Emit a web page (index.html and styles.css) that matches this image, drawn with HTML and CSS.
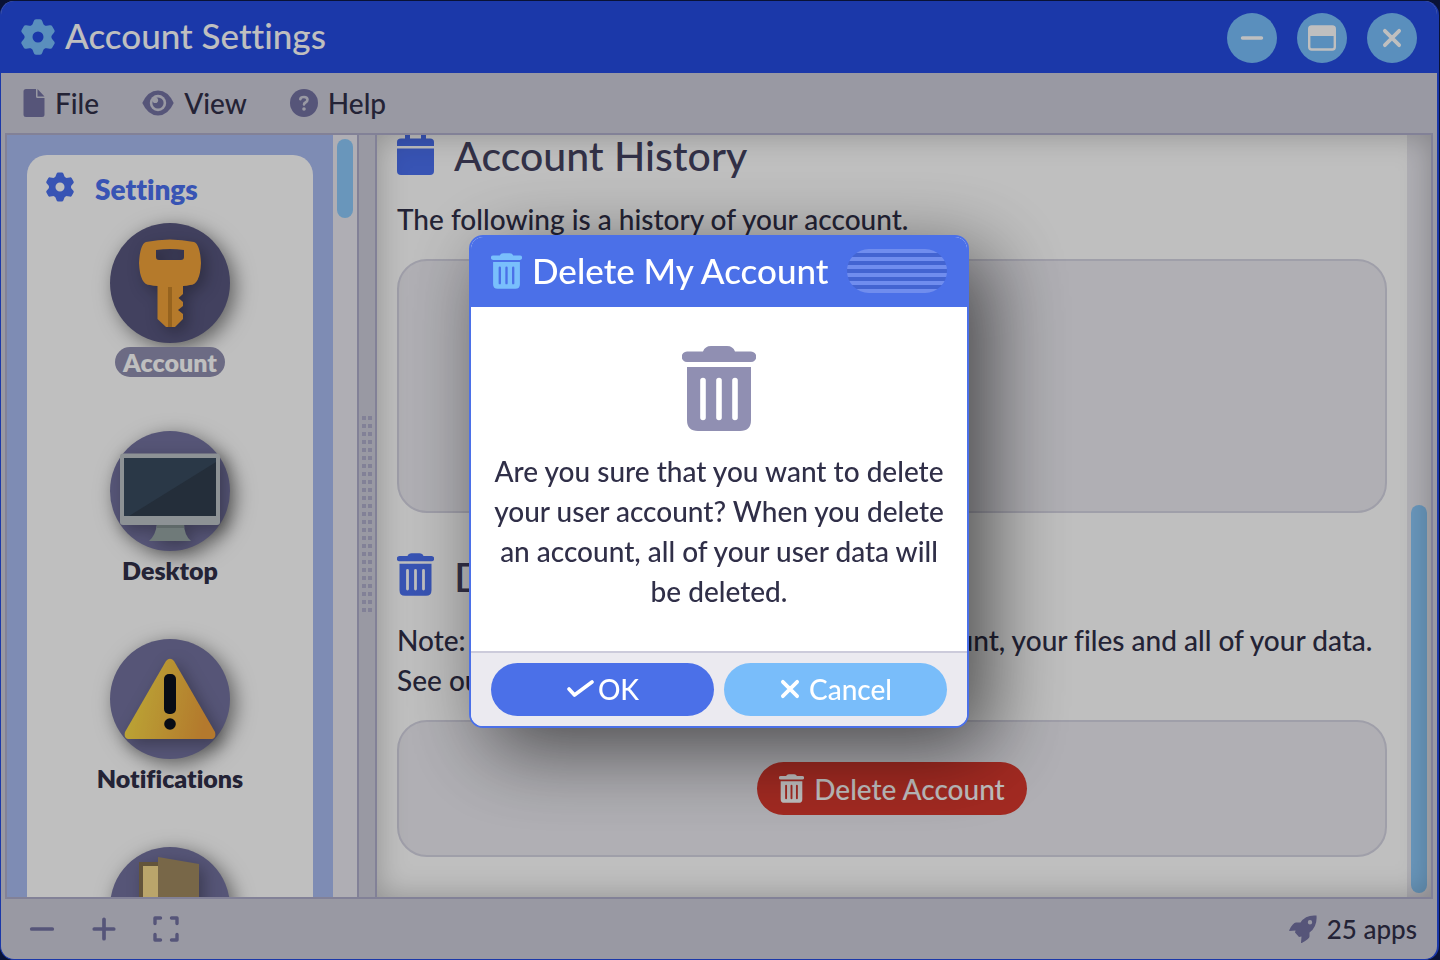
FILE: index.html
```html
<!DOCTYPE html>
<html lang="en">
<head>
<meta charset="utf-8">
<title>Account Settings</title>
<link rel="stylesheet" href="styles.css">
</head>
<body>
<svg class="symbols" aria-hidden="true">
  <symbol id="gear" viewBox="0 0 34 36">
    <circle cx="17" cy="18" r="9.500" fill="none" stroke="currentColor" stroke-width="8"/>
    <g fill="currentColor">
      <path id="tooth" d="M10.500 8 12.800 2Q13.200 .3 15 .3H19Q20.800 .3 21.200 2L23.500 8Z"/>
      <use href="#tooth" transform="rotate(60 17 18)"/>
      <use href="#tooth" transform="rotate(120 17 18)"/>
      <use href="#tooth" transform="rotate(180 17 18)"/>
      <use href="#tooth" transform="rotate(240 17 18)"/>
      <use href="#tooth" transform="rotate(300 17 18)"/>
    </g>
  </symbol>
  <symbol id="trash" viewBox="0 0 74 85">
    <g fill="currentColor">
      <path d="M5 5.500H21Q23 0 29 0H45Q51 0 53 5.500H69A5.200 5.200 0 0 1 69 16H5A5.200 5.200 0 0 1 5 5.500Z"/>
      <path fill-rule="evenodd" d="M5 21H69V74Q69 85 58 85H16Q5 85 5 74ZM18.200 34.500V71.500A2.800 2.800 0 0 0 23.800 71.500V34.500A2.800 2.800 0 0 0 18.200 34.500ZM34.200 34.500V71.500A2.800 2.800 0 0 0 39.800 71.500V34.500A2.800 2.800 0 0 0 34.200 34.500ZM50.200 34.500V71.500A2.800 2.800 0 0 0 55.800 71.500V34.500A2.800 2.800 0 0 0 50.200 34.500Z"/>
    </g>
  </symbol>
  <symbol id="minus" viewBox="0 0 24 24"><path d="M2.500 12H21.500" stroke="currentColor" stroke-width="3.400" stroke-linecap="round"/></symbol>
  <symbol id="plus" viewBox="0 0 24 24"><path d="M3 12H21M12 3V21" stroke="currentColor" stroke-width="3.400" stroke-linecap="round"/></symbol>
  <symbol id="cross" viewBox="0 0 20 20"><path d="M3.500 3.500 16.500 16.500M16.500 3.500 3.500 16.500" stroke="currentColor" stroke-width="3.400" stroke-linecap="round"/></symbol>
</svg>

<div class="window">
  <header class="titlebar">
    <svg class="icon-title"><use href="#gear"/></svg>
    <h1>Account Settings</h1>
    <div class="controls">
      <button class="round" aria-label="Minimize"><svg class="icon-24"><use href="#minus"/></svg></button>
      <button class="round" aria-label="Maximize">
        <svg width="28" height="26" viewBox="0 0 28 26"><rect x="1.200" y="1.500" width="25.600" height="23" rx="2.500" fill="none" stroke="currentColor" stroke-width="2.400"/><path d="M1 11V3Q1 1 3 1H25Q27 1 27 3V11Z" fill="currentColor"/></svg>
      </button>
      <button class="round" aria-label="Close"><svg class="icon-22"><use href="#cross"/></svg></button>
    </div>
  </header>

  <nav class="menubar">
    <button class="menu">
      <svg width="22" height="30" viewBox="0 0 22 30" fill="currentColor"><path d="M2.500 1H13V8.500Q13 10 14.500 10H21.500V26.500Q21.500 29 19 29H3Q.5 29 .5 26.500V3.500Q.5 1 3 1Z"/><path d="M14.500 1 21.500 8.500H14.500Z"/></svg>
      File
    </button>
    <button class="menu">
      <svg width="32" height="26" viewBox="0 0 32 26"><path d="M.3 13Q6 .5 16 .5T31.700 13Q26 25.500 16 25.500T.3 13Z" fill="currentColor"/><circle class="cut" cx="16" cy="13" r="8.200"/><circle cx="16" cy="13" r="5.600" fill="currentColor"/><circle class="cut" cx="13.300" cy="10.300" r="2.800"/></svg>
      View
    </button>
    <button class="menu">
      <svg width="28" height="28" viewBox="0 0 28 28"><circle cx="14" cy="14" r="14" fill="currentColor"/><path class="cut-line" d="M10.300 10.200Q10.600 8 14 8T17.500 10.800Q17.500 12.500 15.500 13.500Q14 14.300 14 15.500" fill="none" stroke-width="2.600" stroke-linecap="round"/><circle class="cut" cx="14" cy="20" r="1.800"/></svg>
      Help
    </button>
  </nav>

  <div class="panes">
    <aside class="sidebar">
      <div class="sheet">
        <h2 class="sheet-title"><svg class="icon-small-gear"><use href="#gear"/></svg>Settings</h2>
        <button class="item selected">
          <span class="disc"><svg class="art" viewBox="0 0 120 120"><path fill="#f2a33a" d="M36 19Q60 14 84 19Q90 21 91 40Q90 62 80 62Q77 63 73 63V71L68.500 75 73 79V83L68 87 73 91V96L65 104H56L47.500 96V63Q43 63 40 62Q30 62 29 40Q30 21 36 19ZM46 27V34Q46 37 49 37H71Q74 37 74 34V27Q60 25 46 27Z" fill-rule="evenodd"/><path fill="#c88529" d="M58 64H62V104H58Z"/></svg></span>
          <span class="label">Account</span>
        </button>
        <button class="item">
          <span class="disc"><svg class="art" viewBox="0 0 120 120"><path fill="#94a3a2" d="M47 92H74Q74 104 81 110H39Q46 104 47 92Z"/><path fill="#7f8c8d" d="M47 92H74V97H47Z"/><rect x="10" y="22.500" width="100" height="71.500" rx="3" fill="#bdc3c7"/><path fill="#394b5f" d="M14 27H106V85H14Z"/><path fill="#303e4e" d="M106 31V85H19Z"/></svg></span>
          <span class="label">Desktop</span>
        </button>
        <button class="item">
          <span class="disc"><svg class="art" viewBox="0 0 120 120"><defs><linearGradient id="amber" x1="0" y1="0" x2="1" y2="0.200"><stop offset="0" stop-color="#fbe549"/><stop offset="1" stop-color="#f0a23c"/></linearGradient></defs><path fill="url(#amber)" d="M56 22Q60 17.500 64 22L105 93Q106.500 99 102 100H18Q13.500 99 15 93Z"/><rect x="54" y="35" width="12" height="40" rx="5" fill="#0b101d"/><circle cx="60" cy="85" r="5.800" fill="#0b101d"/></svg></span>
          <span class="label">Notifications</span>
        </button>
        <button class="item">
          <span class="disc"><svg class="art" viewBox="0 0 120 120"><path fill="#85704f" d="M29 15H60V100H29Z"/><path fill="#f8dc8f" d="M33 19H50V100H33Z"/><path fill="#a08a60" d="M48 10 89 17V100H48Z"/></svg></span>
        </button>
      </div>
    </aside>
    <div class="track"><div class="thumb thumb-side"></div></div>
    <div class="splitter"><div class="grip"></div></div>
    <main class="content">
      <div class="document">
        <h2 class="section"><svg class="icon-section" viewBox="0 0 37 43" fill="currentColor"><path d="M8 0H13V6.500H24V0H29V6.500H33Q37 6.500 37 10V14H0V10Q0 6.500 4 6.500H8Z"/><path d="M0 16.500H37V39Q37 43 33 43H4Q0 43 0 39Z"/></svg>Account History</h2>
        <p>The following is a history of your account.</p>
        <div class="well history"></div>
        <h2 class="section"><svg class="icon-section"><use href="#trash"/></svg>Delete Account</h2>
        <p>Note: This will permanently remove your account, your files and all of your data. See our privacy policy for more info.</p>
        <div class="well actions">
          <button class="pill danger"><svg class="icon-button"><use href="#trash"/></svg>Delete Account</button>
        </div>
      </div>
      <div class="track"><div class="thumb thumb-main"></div></div>
    </main>
  </div>

  <footer class="statusbar">
    <button class="tool" aria-label="Zoom out"><svg class="icon-26"><use href="#minus"/></svg></button>
    <button class="tool" aria-label="Zoom in"><svg class="icon-26"><use href="#plus"/></svg></button>
    <button class="tool" aria-label="Full screen"><svg class="icon-26" viewBox="0 0 26 26"><path d="M2 7.500V2H7.500M18.500 2H24V7.500M24 18.500V24H18.500M7.500 24H2V18.500" fill="none" stroke="currentColor" stroke-width="3.400" stroke-linecap="round" stroke-linejoin="round"/></svg></button>
    <div class="status">
      <svg width="28" height="28" viewBox="0 0 28 28" fill="currentColor"><path fill-rule="evenodd" d="M27.500.5Q28.500 11.500 20.500 17.500V21.500Q20.500 23.500 12.800 28Q12 28 12 27.500L12.500 21.500 10 22 6 17.500 6.500 15.500.5 16Q0 15.500 .3 15Q4 7.500 7 7.500H11.500Q16.500-.5 27.500.5ZM21 5A2.200 2.200 0 1 0 21 9.400A2.200 2.200 0 0 0 21 5Z"/></svg>
      25 apps
    </div>
  </footer>
</div>

<div class="backdrop">
  <section class="dialog" role="dialog" aria-labelledby="dialog-title">
    <header class="dialog-head">
      <svg class="icon-dialog"><use href="#trash"/></svg>
      <h2 id="dialog-title">Delete My Account</h2>
      <div class="handle"></div>
    </header>
    <div class="dialog-body">
      <svg class="icon-large"><use href="#trash"/></svg>
      <p>Are you sure that you want to delete your user account? When you delete an account, all of your user data will be deleted.</p>
    </div>
    <footer class="dialog-foot">
      <button class="pill primary"><svg width="28" height="20" viewBox="0 0 28 20"><path d="M3 10 8.500 16 26 3" fill="none" stroke="currentColor" stroke-width="3.600" stroke-linecap="round" stroke-linejoin="round"/></svg>OK</button>
      <button class="pill secondary"><svg class="icon-22"><use href="#cross"/></svg>Cancel</button>
    </footer>
  </section>
</div>
</body>
</html>
```

FILE: styles.css
```css
* { box-sizing: border-box; }

body {
  margin: 0;
  height: 100vh;
  padding: 1px 1px 0 0;
  background: #0d1848;
  color: #302f48;
  font: 500 28px/40px Lato, "Open Sans", sans-serif;
  font-variant-ligatures: none;
  overflow: hidden;
}

h1, h2, p { margin: 0; font-weight: 500; }
button { border: 0; padding: 0; background: none; color: inherit; font: inherit; font-variant-ligatures: none; }
svg { flex: none; display: block; }
.symbols { position: absolute; width: 0; height: 0; }

.window {
  display: flex;
  flex-direction: column;
  height: 100%;
  border: solid #244be2;
  border-width: 0 2px 1px 1px;
  border-radius: 14px;
  background: #cdccda;
  overflow: hidden;
}

.titlebar {
  display: flex;
  align-items: center;
  gap: 10px;
  height: 72px;
  padding: 0 20px;
  background: #244be2;
  color: #79bffc;
}
.titlebar h1 { flex: 1; padding-bottom: 4px; color: #fff; font-size: 35px; }
.icon-title { width: 34px; height: 36px; }
.icon-small-gear { width: 28px; height: 30px; margin-bottom: 4px; }
.icon-22 { width: 22px; height: 22px; }
.icon-24 { width: 24px; height: 24px; }
.icon-26 { width: 26px; height: 26px; }
.controls { display: flex; gap: 20px; padding-top: 2px; }
.round {
  display: grid;
  place-items: center;
  width: 50px;
  height: 50px;
  border-radius: 50%;
  background: #79bffc;
  color: #fff;
}

.menubar { display: flex; gap: 43px; height: 60px; padding: 0 22px; }
.menu { display: flex; align-items: center; gap: 10px; }
.menu svg, .status svg { color: #7372a2; }
.cut { fill: #cdccda; }
.cut-line { stroke: #cdccda; }

.panes {
  display: flex;
  flex: 1;
  min-height: 0;
  margin: 0 4px;
  border: 2px solid #aeacca;
}
.sidebar { width: 326px; padding: 20px 20px 0; background: #a9bbf1; overflow: hidden; }
.sheet {
  display: flex;
  flex-direction: column;
  align-items: center;
  padding: 14px 19px;
  border-radius: 20px;
  background: #fff;
}
.sheet-title {
  display: flex;
  align-items: center;
  align-self: stretch;
  gap: 21px;
  margin-bottom: 14px;
  color: #4b70f0;
  font-weight: 800;
  font-size: 28px;
}
.item {
  display: flex;
  flex-direction: column;
  align-items: center;
  gap: 4px;
  margin-bottom: 54px;
  font-weight: 800;
  font-size: 25px;
  line-height: 30px;
}
.disc {
  width: 120px;
  height: 120px;
  border-radius: 50%;
  background: #73729f;
  box-shadow: 5px 5px 20px rgba(0, 0, 0, 0.5);
}
.art { width: 120px; height: 120px; filter: drop-shadow(5px 5px 8px rgba(0, 0, 0, 0.3)); }
.selected .disc { background: #58577f; }
.label { padding: 0 8px; border-radius: 15px; }
.selected .label { background: #908fb0; color: #fff; }

.track { flex: none; width: 24px; padding: 4px; background: #eae9f0; }
.thumb { border-radius: 8px; background: #8cc9fa; }
.thumb-side { height: 79px; }
.thumb-main { height: 388px; }

.splitter {
  display: grid;
  place-items: center;
  width: 20px;
  padding-bottom: 4px;
  border: solid #aeacca;
  border-width: 0 2px;
  background: #cdccda;
}
.grip {
  width: 10px;
  height: 196px;
  background:
    linear-gradient(#cdccda, #cdccda) 4px 0 / 2px 100% no-repeat,
    repeating-linear-gradient(#aeacca 0 4px, transparent 4px 8px);
}

.content { position: relative; display: flex; flex: 1; min-width: 0; background: #fff; }
.content::after {
  content: "";
  position: absolute;
  inset: 0;
  box-shadow: inset 0 0 30px rgba(0, 0, 0, 0.25);
  pointer-events: none;
}
.content .track { display: flex; flex-direction: column; justify-content: flex-end; }
.document {
  display: flex;
  flex: 1;
  flex-direction: column;
  justify-content: flex-end;
  padding: 0 20px 40px;
  overflow: hidden;
}
.section {
  display: flex;
  align-items: center;
  gap: 20px;
  margin: 40px 0 20px;
  color: #444260;
  font-size: 41px;
  line-height: 44px;
}
.icon-section { width: 37px; height: 43px; margin-bottom: 4px; color: #4b70f0; }
.well { margin-top: 20px; border: 2px solid #d5d4e2; border-radius: 30px; background: #ebeaf0; }
.history { height: 254px; flex: none; }
.actions { display: flex; justify-content: center; padding: 40px; }

.pill {
  display: flex;
  align-items: center;
  justify-content: center;
  height: 53px;
  border-radius: 27px;
  color: #fff;
}
.danger { gap: 10px; padding: 0 22px; background: #d9382d; }
.icon-button { width: 25px; height: 29px; }

.statusbar { display: flex; align-items: center; gap: 36px; height: 60px; padding: 0 20px 1px 28px; color: #7372a2; }
.status {
  display: flex;
  align-items: center;
  gap: 10px;
  margin-left: auto;
  color: #302f48;
  font-size: 26px;
}

.backdrop {
  position: fixed;
  inset: 0;
  display: grid;
  place-items: center;
  padding: 2px 2px 0 0;
  background: rgba(0, 0, 0, 0.25);
}
.dialog {
  width: 500px;
  border: 2px solid #4b70e8;
  border-radius: 14px;
  background: #fff;
  box-shadow: 20px 20px 80px rgba(0, 0, 0, 0.6);
  overflow: hidden;
}
.dialog-head {
  display: flex;
  align-items: center;
  gap: 10px;
  height: 70px;
  padding: 0 20px 2px;
  background: #4b70e8;
  color: #79bffc;
}
.dialog-head h2 { padding-bottom: 2px; color: #fff; font-size: 35px; white-space: nowrap; }
.icon-dialog { width: 31px; height: 36px; }
.handle {
  flex: 1;
  height: 44px;
  margin-left: 8px;
  border-radius: 22px;
  background: repeating-linear-gradient(#708dee 0 4px, #4364d1 4px 8px);
}
.dialog-body {
  display: flex;
  flex-direction: column;
  align-items: center;
  gap: 20px;
  padding: 39px 18px 40px;
  text-align: center;
}
.icon-large { width: 74px; height: 85px; color: #908fb2; }
.dialog-foot {
  display: grid;
  grid-template-columns: 1fr 1fr;
  gap: 10px;
  padding: 10px 20px;
  border-top: 2px solid #cccbdb;
  background: #ebeaf0;
}
.primary { gap: 4px; background: #4b70e8; }
.secondary { gap: 8px; background: #79bdfa; }
```
